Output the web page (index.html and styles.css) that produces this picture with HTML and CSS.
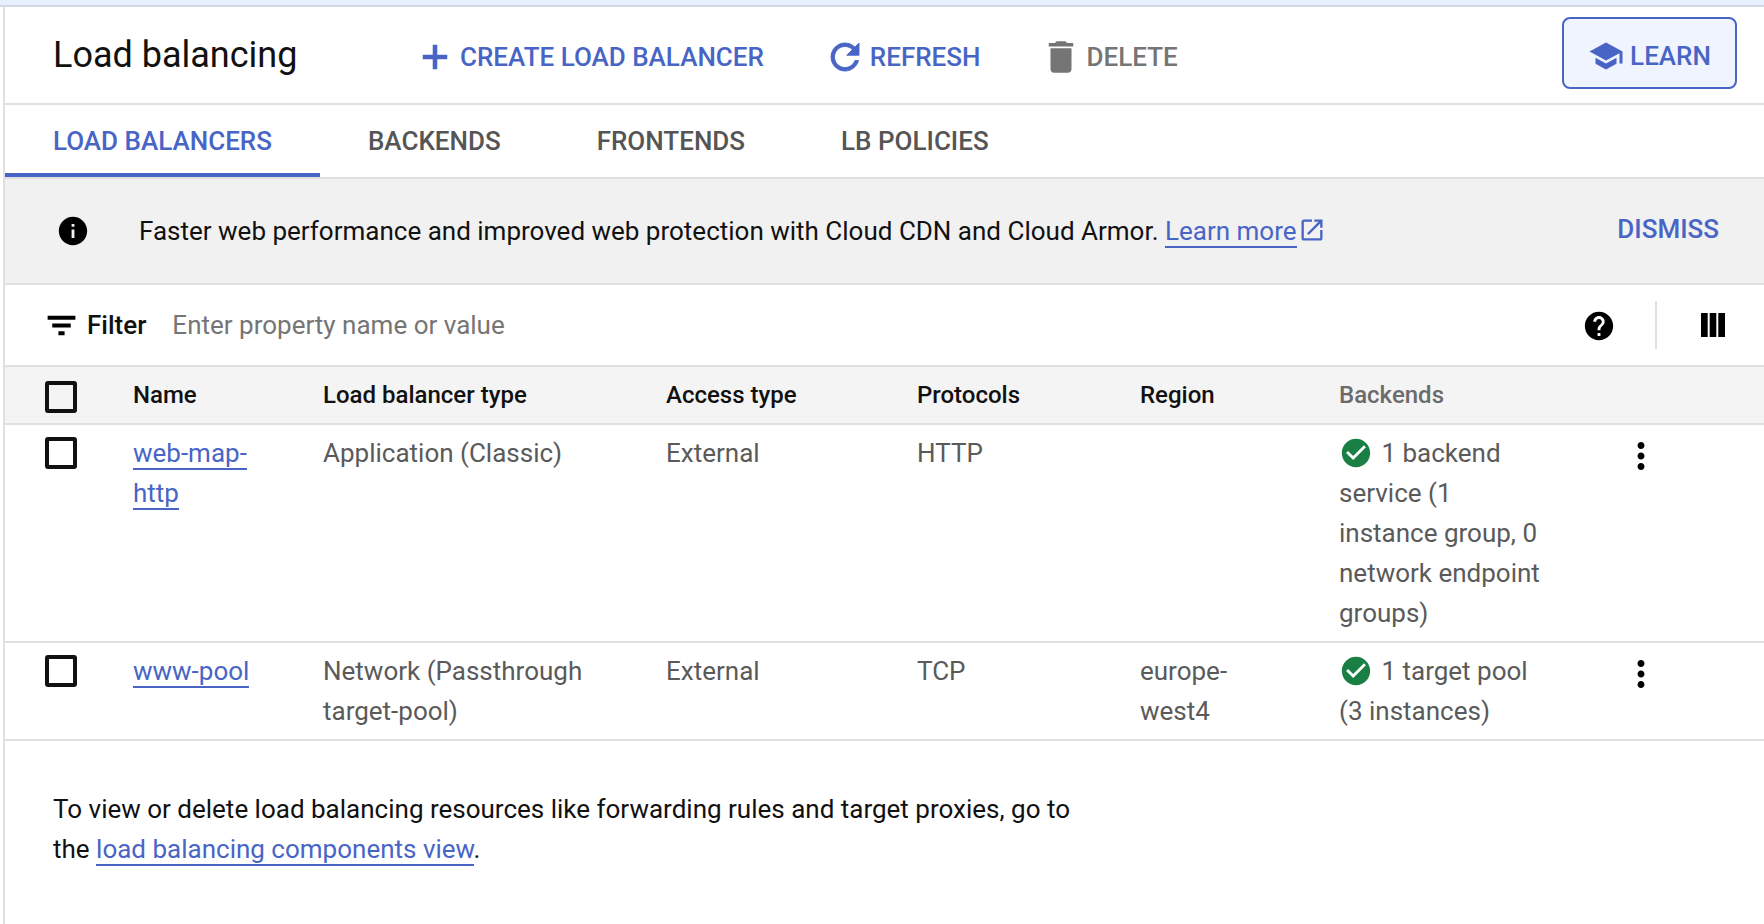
FILE: index.html
```html
<!DOCTYPE html>
<html lang="en">

<head>
    <meta charset="UTF-8">
    <meta name="viewport" content="width=device-width, initial-scale=1.0">
    <title>Load balancing</title>
    <link rel="stylesheet" href="styles.css">
</head>

<body>
    <div class="top-strip"></div>
    <div class="app">
        <header class="header">
            <h1 class="title">Load balancing</h1>
            <div class="actions">
                <a class="action">
                    <svg class="action-icon" viewBox="0 0 24 24"><path d="M19 13.300h-5.700V19h-2.600v-5.700H5v-2.600h5.700V5h2.600v5.700H19z"/></svg>
                    CREATE LOAD BALANCER
                </a>
                <a class="action">
                    <svg class="action-icon bold" viewBox="0 0 24 24"><path d="M17.65 6.35C16.2 4.9 14.21 4 12 4c-4.42 0-7.99 3.58-7.99 8s3.57 8 7.99 8c3.73 0 6.84-2.55 7.73-6h-2.08c-.82 2.33-3.04 4-5.65 4-3.31 0-6-2.69-6-6s2.69-6 6-6c1.66 0 3.14.69 4.22 1.78L13 11h7V4l-2.35 2.35z"/></svg>
                    REFRESH
                </a>
                <a class="action disabled">
                    <svg class="action-icon" viewBox="0 0 24 24"><path d="M6 19c0 1.1.9 2 2 2h8c1.1 0 2-.9 2-2V7H6v12zM19 4h-3.5l-1-1h-5l-1 1H5v2h14V4z"/></svg>
                    DELETE
                </a>
            </div>
            <a class="learn">
                <svg class="learn-icon" viewBox="0 0 24 24"><path d="M5 13.18v4L12 21l7-3.82v-4L12 17l-7-3.82zM12 3L1 9l11 6 9-4.91V17h2V9L12 3z"/></svg>
                LEARN
            </a>
        </header>

        <nav class="tabs">
            <a class="tab active">LOAD BALANCERS</a>
            <a class="tab">BACKENDS</a>
            <a class="tab">FRONTENDS</a>
            <a class="tab">LB POLICIES</a>
        </nav>

        <section class="banner">
            <svg class="icon info-icon" viewBox="0 0 24 24"><path d="M12 2C6.48 2 2 6.48 2 12s4.48 10 10 10 10-4.48 10-10S17.52 2 12 2zm1 15h-2v-6h2v6zm0-8h-2V7h2v2z"/></svg>
            <p class="banner-text">Faster web performance and improved web protection with Cloud CDN and Cloud Armor. <a class="link">Learn more</a><svg class="external" viewBox="0 0 24 24"><path d="M19 19H5V5h7V3H5c-1.11 0-2 .9-2 2v14c0 1.1.89 2 2 2h14c1.1 0 2-.9 2-2v-7h-2v7zM14 3v2h3.59l-9.83 9.83 1.41 1.41L19 6.41V10h2V3h-7z"/></svg></p>
            <a class="dismiss">DISMISS</a>
        </section>

        <div class="filter-bar">
            <svg class="filter-icon" viewBox="0 0 24 24"><path d="M10 18.300h4v-2.600h-4v2.600zM3 5.700v2.600h18V5.700H3zm3 7.600h12v-2.600H6v2.600z"/></svg>
            <span class="filter-label">Filter</span>
            <span class="filter-input">Enter property name or value</span>
            <svg class="icon help-icon" viewBox="0 0 24 24"><path d="M12 2C6.48 2 2 6.48 2 12s4.48 10 10 10 10-4.48 10-10S17.52 2 12 2zm1 17h-2v-2h2v2zm2.07-7.75l-.9.92C13.45 12.9 13 13.5 13 15h-2v-.5c0-1.1.45-2.1 1.17-2.83l1.24-1.26c.37-.36.59-.86.59-1.41 0-1.1-.9-2-2-2s-2 .9-2 2H8c0-2.21 1.79-4 4-4s4 1.79 4 4c0 .88-.36 1.68-.93 2.25z"/></svg>
            <span class="divider"></span>
            <svg class="columns-icon" viewBox="0 0 24 24"><path d="M0 0h6.700v24H0zM8.700 0h6.600v24H8.700zM17.300 0H24v24h-6.700z"/></svg>
        </div>

        <table class="lb-table">
            <colgroup>
                <col class="col-check">
                <col class="col-name">
                <col class="col-type">
                <col class="col-access">
                <col class="col-protocols">
                <col class="col-region">
                <col class="col-backends">
                <col>
            </colgroup>
            <thead>
                <tr>
                    <th><input class="checkbox" type="checkbox"></th>
                    <th>Name</th>
                    <th>Load balancer type</th>
                    <th>Access type</th>
                    <th>Protocols</th>
                    <th>Region</th>
                    <th class="muted">Backends</th>
                    <th></th>
                </tr>
            </thead>
            <tbody>
                <tr>
                    <td><input class="checkbox" type="checkbox"></td>
                    <td><a class="link">web-map-http</a></td>
                    <td>Application (Classic)</td>
                    <td>External</td>
                    <td>HTTP</td>
                    <td></td>
                    <td>
                        <svg class="status-icon" viewBox="0 0 24 24"><path d="M12 2C6.48 2 2 6.48 2 12s4.48 10 10 10 10-4.48 10-10S17.52 2 12 2zm-2 15l-5-5 1.41-1.41L10 14.170l7.590-7.590L19 8l-9 9z"/></svg>
                        1 backend service (1 instance group, 0 network endpoint groups)
                    </td>
                    <td><svg class="more-icon" viewBox="0 0 24 24"><path d="M12 8c1.100 0 2-.9 2-2s-.9-2-2-2-2 .9-2 2 .9 2 2 2zm0 2c-1.100 0-2 .9-2 2s.9 2 2 2 2-.9 2-2-.9-2-2-2zm0 6c-1.100 0-2 .9-2 2s.9 2 2 2 2-.9 2-2-.9-2-2-2z"/></svg></td>
                </tr>
                <tr>
                    <td><input class="checkbox" type="checkbox"></td>
                    <td><a class="link">www-pool</a></td>
                    <td>Network (Passthrough target-pool)</td>
                    <td>External</td>
                    <td>TCP</td>
                    <td>europe-west4</td>
                    <td>
                        <svg class="status-icon" viewBox="0 0 24 24"><path d="M12 2C6.48 2 2 6.48 2 12s4.48 10 10 10 10-4.48 10-10S17.52 2 12 2zm-2 15l-5-5 1.41-1.41L10 14.170l7.590-7.590L19 8l-9 9z"/></svg>
                        1 target pool (3 instances)
                    </td>
                    <td><svg class="more-icon" viewBox="0 0 24 24"><path d="M12 8c1.100 0 2-.9 2-2s-.9-2-2-2-2 .9-2 2 .9 2 2 2zm0 2c-1.100 0-2 .9-2 2s.9 2 2 2 2-.9 2-2-.9-2-2-2zm0 6c-1.100 0-2 .9-2 2s.9 2 2 2 2-.9 2-2-.9-2-2-2z"/></svg></td>
                </tr>
            </tbody>
        </table>

        <p class="note">To view or delete load balancing resources like forwarding rules and target proxies, go to the <a class="link">load balancing components view</a>.</p>
    </div>
</body>

</html>
```

FILE: styles.css
```css
:root {
    --blue: #4865c6;
    --line: #e0e0e0;
}

body {
    margin: 0;
    font-family: Roboto, "Liberation Sans", sans-serif;
    font-size: 26px;
    line-height: 40px;
    color: #5a5a5a;
    background: #fff;
}

.top-strip {
    height: 5px;
    background: #e8f0fe;
    border-bottom: 2px solid #d3d9e6;
}

.app {
    margin-left: 3px;
    border-left: 2px solid var(--line);
    height: 917px;
    overflow: hidden;
}

/* header */

.header {
    display: flex;
    align-items: center;
    height: 96px;
    padding-left: 48px;
    padding-right: 27px;
    border-bottom: 2px solid var(--line);
}

.title {
    margin: 0;
    font-size: 36px;
    font-weight: 400;
    color: #111;
    width: 361px;
}

.actions {
    display: flex;
    gap: 60px;
    margin-top: 4px;
}

.action {
    display: flex;
    align-items: center;
    gap: 4px;
    font-weight: 500;
    color: var(--blue);
}

.action.disabled {
    color: #757575;
}

.action-icon {
    width: 42px;
    height: 42px;
    fill: currentColor;
}

.action-icon.bold {
    stroke: currentColor;
    stroke-width: 0.5;
}

.learn {
    display: flex;
    align-items: center;
    justify-content: center;
    gap: 6px;
    box-sizing: border-box;
    width: 175px;
    height: 72px;
    padding-top: 6px;
    margin-left: auto;
    margin-top: -5px;
    background: #f0f4fe;
    border: 2px solid var(--blue);
    border-radius: 8px;
    font-weight: 500;
    color: var(--blue);
}

.learn-icon {
    width: 36px;
    height: 36px;
    fill: currentColor;
}

/* tabs */

.tabs {
    display: flex;
    height: 72px;
    border-bottom: 2px solid var(--line);
}

.tab {
    box-sizing: border-box;
    height: 72px;
    padding: 16px 48px 0;
    font-weight: 500;
    color: #555;
}

.tab.active {
    color: var(--blue);
    border-bottom: 4px solid var(--blue);
}

/* banner */

.banner {
    display: flex;
    align-items: center;
    height: 104px;
    padding-left: 51px;
    padding-right: 45px;
    background: #f1f1f1;
    border-bottom: 2px solid var(--line);
    color: #111;
}

.icon {
    width: 34px;
    height: 34px;
    flex: none;
}

.banner-text {
    margin: 0 0 0 49px;
}

.external {
    width: 28px;
    height: 28px;
    margin-left: 1px;
    vertical-align: -4px;
    fill: var(--blue);
}

.link {
    color: var(--blue);
    border-bottom: 2px solid var(--blue);
}

.dismiss {
    margin-left: auto;
    margin-top: -5px;
    font-weight: 500;
    color: var(--blue);
}

/* filter */

.filter-bar {
    display: flex;
    align-items: center;
    height: 80px;
    border-bottom: 2px solid var(--line);
}

.filter-icon {
    width: 37px;
    height: 37px;
    margin-left: 38px;
}

.filter-label {
    margin-left: 7px;
    font-weight: 500;
    color: #111;
}

.filter-input {
    margin-left: 26px;
    color: #757575;
}

.help-icon {
    margin-left: auto;
    margin-right: -1px;
    margin-top: 2px;
}

.divider {
    width: 2px;
    height: 48px;
    margin-left: 40px;
    background: var(--line);
}

.columns-icon {
    width: 24px;
    height: 24px;
    margin-left: 44px;
    margin-right: 39px;
}

/* table */

.lb-table {
    width: 100%;
    table-layout: fixed;
    border-collapse: collapse;
}

.col-check {
    width: 128px;
}

.col-name {
    width: 190px;
}

.col-type {
    width: 343px;
}

.col-access {
    width: 251px;
}

.col-protocols {
    width: 223px;
}

.col-region {
    width: 199px;
}

.col-backends {
    width: 258px;
}

.lb-table th {
    height: 56px;
    padding: 0 50px 0 0;
    background: #f4f4f4;
    border-bottom: 2px solid var(--line);
    text-align: left;
    font-size: 24px;
    font-weight: 500;
    color: #111;
}

.lb-table th.muted {
    color: #6b6b6b;
}

.lb-table td {
    padding: 8px 50px 8px 0;
    border-bottom: 2px solid var(--line);
    vertical-align: top;
}

.checkbox {
    appearance: none;
    display: block;
    box-sizing: border-box;
    width: 32px;
    height: 32px;
    margin: 4px 0 0 40px;
    background: #fff;
    border: 4px solid #111;
    border-radius: 3px;
}

thead .checkbox {
    background: transparent;
}

.status-icon {
    width: 34px;
    height: 34px;
    margin: 0 2px 0 0;
    vertical-align: -8px;
    fill: #1a7f45;
}

.more-icon {
    display: block;
    width: 42px;
    height: 42px;
    margin: 2px 0 0 23px;
}

/* footer note */

.note {
    width: 1030px;
    margin: 48px 0 0 48px;
    color: #111;
}
```
